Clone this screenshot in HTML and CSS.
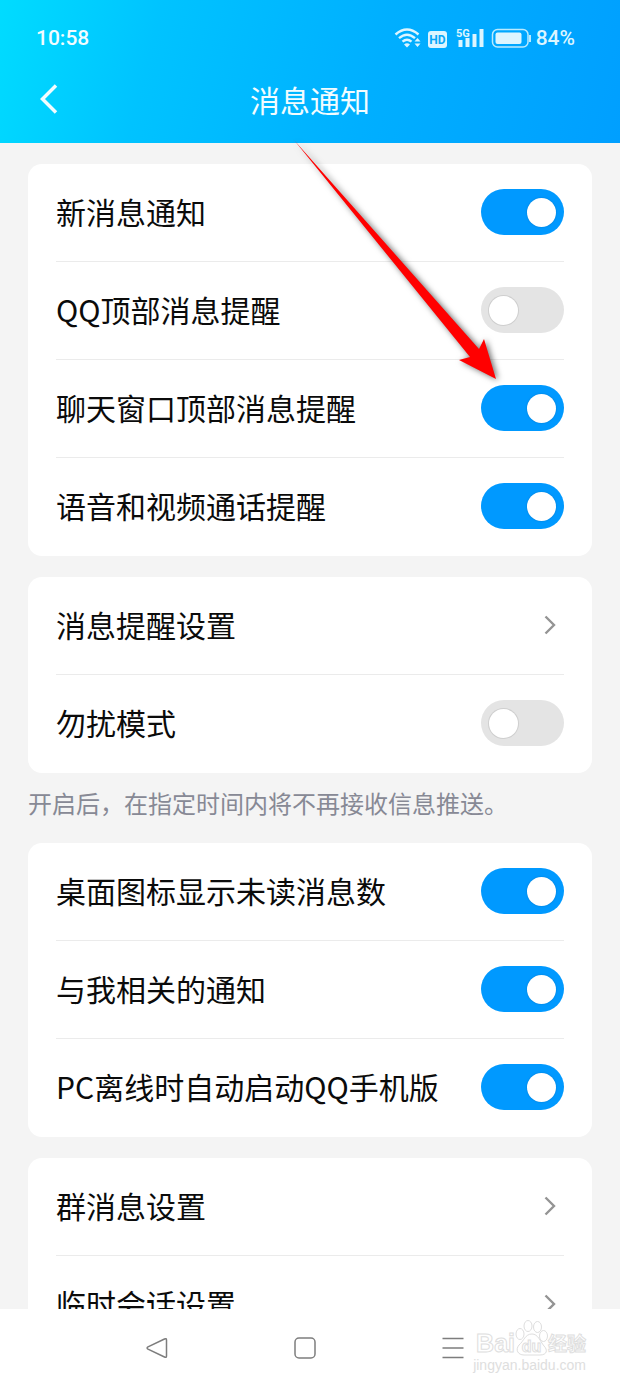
FILE: index.html
```html
<!DOCTYPE html>
<html lang="zh-CN">
<head>
<meta charset="utf-8">
<meta name="viewport" content="width=device-width, initial-scale=1">
<title>消息通知</title>
<link rel="stylesheet" href="styles.css">
</head>
<body>
<div class="screen">
  <header class="header">
    <div class="status">
      <time class="clock">10:58</time>
      <div class="indicators">
        <svg class="indicator-icons" width="137" height="24" viewBox="0 0 137 24" fill="none" aria-hidden="true">
          <g stroke="#dcf5ff" stroke-width="2.4">
            <path d="M1.500 8.500Q13 -1.500 24.500 8.500M5 12.200Q13 5.200 21 12.200M8.500 15.700Q13 11.700 17.500 15.700"/>
          </g>
          <path d="M10 18.500Q13 16 16 18.500L13 21.500Z" fill="#dcf5ff"/>
          <path d="M20.500 15.500L23.500 12L26.500 15.500ZM20.500 17.500L23.500 21L26.500 17.500Z" fill="#dcf5ff"/>
          <rect x="34" y="5" width="19" height="17" rx="3" fill="#dcf5ff"/>
          <text class="hd-label" x="43.500" y="18" text-anchor="middle">HD</text>
          <text class="network-label" x="62" y="11">5G</text>
          <path d="M64.500 14h4v7h-4zM71.500 12h4v9h-4zM78.500 8h4v13h-4zM85.500 3h4v18h-4z" fill="#dcf5ff"/>
          <rect x="98.500" y="3.500" width="35.500" height="17.500" rx="5" stroke="#b9eaff" stroke-width="1.500"/>
          <rect x="101.500" y="6.500" width="26" height="11.500" rx="2" fill="#dcf5ff"/>
          <path d="M136 9v7" stroke="#b9eaff" stroke-width="2"/>
        </svg>
        <span>84%</span>
      </div>
    </div>
    <div class="title-bar">
      <button class="back" type="button" aria-label="返回">
        <svg width="20" height="30" viewBox="0 0 20 30" fill="none" aria-hidden="true"><path d="M17 1.500L3.500 15L17 28.500" stroke="#f2fcff" stroke-width="3.500"/></svg>
      </button>
      <h1 class="title">消息通知</h1>
    </div>
  </header>

  <main class="content">
    <section class="card">
      <label class="row"><span>新消息通知</span><input class="switch" type="checkbox" role="switch" checked></label>
      <label class="row"><span>QQ顶部消息提醒</span><input class="switch" type="checkbox" role="switch"></label>
      <label class="row"><span>聊天窗口顶部消息提醒</span><input class="switch" type="checkbox" role="switch" checked></label>
      <label class="row"><span>语音和视频通话提醒</span><input class="switch" type="checkbox" role="switch" checked></label>
    </section>

    <section class="card">
      <a class="row" href="#reminder"><span>消息提醒设置</span><svg class="chevron" viewBox="0 0 12 20" aria-hidden="true"><path d="M1.500 1.500L10 10L1.500 18.500"/></svg></a>
      <label class="row"><span>勿扰模式</span><input class="switch" type="checkbox" role="switch"></label>
    </section>
    <p class="note">开启后，在指定时间内将不再接收信息推送。</p>

    <section class="card">
      <label class="row"><span>桌面图标显示未读消息数</span><input class="switch" type="checkbox" role="switch" checked></label>
      <label class="row"><span>与我相关的通知</span><input class="switch" type="checkbox" role="switch" checked></label>
      <label class="row"><span>PC离线时自动启动QQ手机版</span><input class="switch" type="checkbox" role="switch" checked></label>
    </section>

    <section class="card">
      <a class="row" href="#group"><span>群消息设置</span><svg class="chevron" viewBox="0 0 12 20" aria-hidden="true"><path d="M1.500 1.500L10 10L1.500 18.500"/></svg></a>
      <a class="row" href="#temporary"><span>临时会话设置</span><svg class="chevron" viewBox="0 0 12 20" aria-hidden="true"><path d="M1.500 1.500L10 10L1.500 18.500"/></svg></a>
    </section>
  </main>

  <nav class="system-nav" aria-label="系统导航">
    <button type="button" aria-label="后退"><svg width="24" height="24" viewBox="0 0 24 24" aria-hidden="true"><path d="M19.500 3Q21.500 2 21.500 4V20Q21.500 22 19.500 21L3 13.200Q1.200 12 3 10.800Z"/></svg></button>
    <button type="button" aria-label="主屏幕"><svg width="24" height="24" viewBox="0 0 24 24" aria-hidden="true"><rect x="2" y="2" width="20" height="20" rx="4"/></svg></button>
    <button type="button" aria-label="最近任务"><svg width="24" height="24" viewBox="0 0 24 24" aria-hidden="true"><path d="M1.500 2.500h21M1.500 12h21M1.500 21.500h21"/></svg></button>
  </nav>

  <svg class="pointer" width="220" height="260" viewBox="0 0 220 260" aria-hidden="true">
    <path d="M4 0L189 209L194 199L206 239L169 220L180 217Z" fill="#f00"/>
  </svg>

  <div class="watermark">
    <div class="brand">
      <span>Bai</span>
      <svg class="paw" width="33" height="38" viewBox="0 0 33 38" aria-hidden="true">
        <ellipse cx="5" cy="15" rx="4" ry="5.500"/>
        <ellipse cx="13" cy="7" rx="4" ry="5.500"/>
        <ellipse cx="22.500" cy="8" rx="4" ry="5.500"/>
        <ellipse cx="28.500" cy="17" rx="4" ry="5.500"/>
        <path d="M17 15C10 15 9 22 4 26C0 31 3 36 9 36H25C32 36 33 31 29 27C25 22 23 15 17 15Z"/>
        <text x="16.500" y="33" text-anchor="middle">du</text>
      </svg>
      <span class="brand-cn">经验</span>
    </div>
    <div class="domain">jingyan.baidu.com</div>
  </div>
</div>
</body>
</html>
```
FILE: styles.css
```css
* {
  box-sizing: border-box;
}

body {
  margin: 0;
  background: #f4f4f4;
  color: #0b0b0b;
  font-family: "Noto Sans CJK SC", "Noto Sans", sans-serif;
}

button {
  display: flex;
  padding: 0;
  border: 0;
  background: none;
}

.screen {
  position: relative;
  display: flex;
  flex-direction: column;
  height: 100vh;
  overflow: hidden;
}

.header {
  flex: none;
  padding: 22px 36px 20px;
  background: linear-gradient(105deg, #00dcff 0%, #00c3ff 25%, #00afff 60%, #009fff 100%);
  color: #f2fcff;
}

.status {
  display: flex;
  align-items: center;
  justify-content: space-between;
  height: 32px;
  padding-right: 9px;
  font-family: Roboto, sans-serif;
  font-size: 21px;
  font-weight: 500;
}

.indicators {
  display: flex;
  align-items: center;
  gap: 5px;
  color: #dcf5ff;
}

.hd-label {
  fill: #08a7f8;
  font-size: 12px;
  font-weight: 700;
}

.network-label {
  fill: #dcf5ff;
  font-size: 11px;
  font-weight: 700;
}

.title-bar {
  display: grid;
  grid-template-columns: 1fr auto 1fr;
  align-items: center;
  height: 48px;
  margin-top: 21px;
}

.back {
  padding-left: 3px;
}

.title {
  margin: 0;
  font-size: 30px;
  font-weight: 400;
  line-height: 44px;
}

.content {
  flex: 1;
  min-height: 0;
  padding: 21px 28px 0;
  overflow: hidden;
}

.card {
  margin-bottom: 21px;
  padding: 0 28px;
  border-radius: 14px;
  background: #fff;
}

.row {
  display: flex;
  align-items: center;
  justify-content: space-between;
  height: 98px;
  padding-bottom: 1px;
  border-bottom: 1px solid #ebebeb;
  color: inherit;
  font-size: 30px;
  line-height: 44px;
  text-decoration: none;
}

.row span {
  padding-bottom: 2px;
}

.row:last-child {
  padding-bottom: 2px;
  border-bottom: 0;
}

.switch {
  flex: none;
  display: flex;
  align-items: center;
  width: 83px;
  height: 46px;
  margin: 0;
  padding: 0 8px;
  border-radius: 23px;
  background: #e4e4e4;
  appearance: none;
}

.switch::before {
  content: "";
  width: 29px;
  height: 29px;
  border-radius: 50%;
  background: #fff;
  box-shadow: 0 0 0 1px #cfcfcf;
}

.switch:checked {
  justify-content: flex-end;
  background: #0099ff;
}

.switch:checked::before {
  box-shadow: 0 0 2px #0078cc;
}

.chevron {
  width: 12px;
  height: 20px;
  margin-right: 8px;
  fill: none;
  stroke: #949494;
  stroke-width: 2.4;
}

.note {
  margin: -7px 0 24px;
  color: #878995;
  font-size: 24px;
  line-height: 32px;
}

.system-nav {
  flex: none;
  display: flex;
  justify-content: space-between;
  align-items: center;
  height: 77px;
  padding: 0 155px 0 145px;
  background: #fff;
}

.system-nav svg {
  fill: none;
  stroke: #7d7d7d;
  stroke-width: 1.5;
}

.pointer {
  position: absolute;
  top: 140px;
  left: 290px;
  filter: drop-shadow(2px 1px 3px rgba(0, 0, 0, 0.6));
  pointer-events: none;
}

.watermark {
  position: absolute;
  right: 34px;
  bottom: 13px;
  color: #fff;
  font-family: "Liberation Sans", "Noto Sans CJK SC", sans-serif;
  font-weight: 700;
  -webkit-text-stroke: 1px #dedede;
}

.brand {
  display: flex;
  align-items: flex-end;
  justify-content: flex-end;
  font-size: 25px;
  line-height: 28px;
}

.brand-cn {
  font-size: 19px;
  line-height: 24px;
}

.paw {
  fill: #fff;
  stroke: #dedede;
}

.paw text {
  font-size: 16px;
}

.domain {
  color: #dedede;
  font-size: 14px;
  font-weight: 400;
  line-height: 16px;
  text-align: right;
  -webkit-text-stroke: 0;
}
```
